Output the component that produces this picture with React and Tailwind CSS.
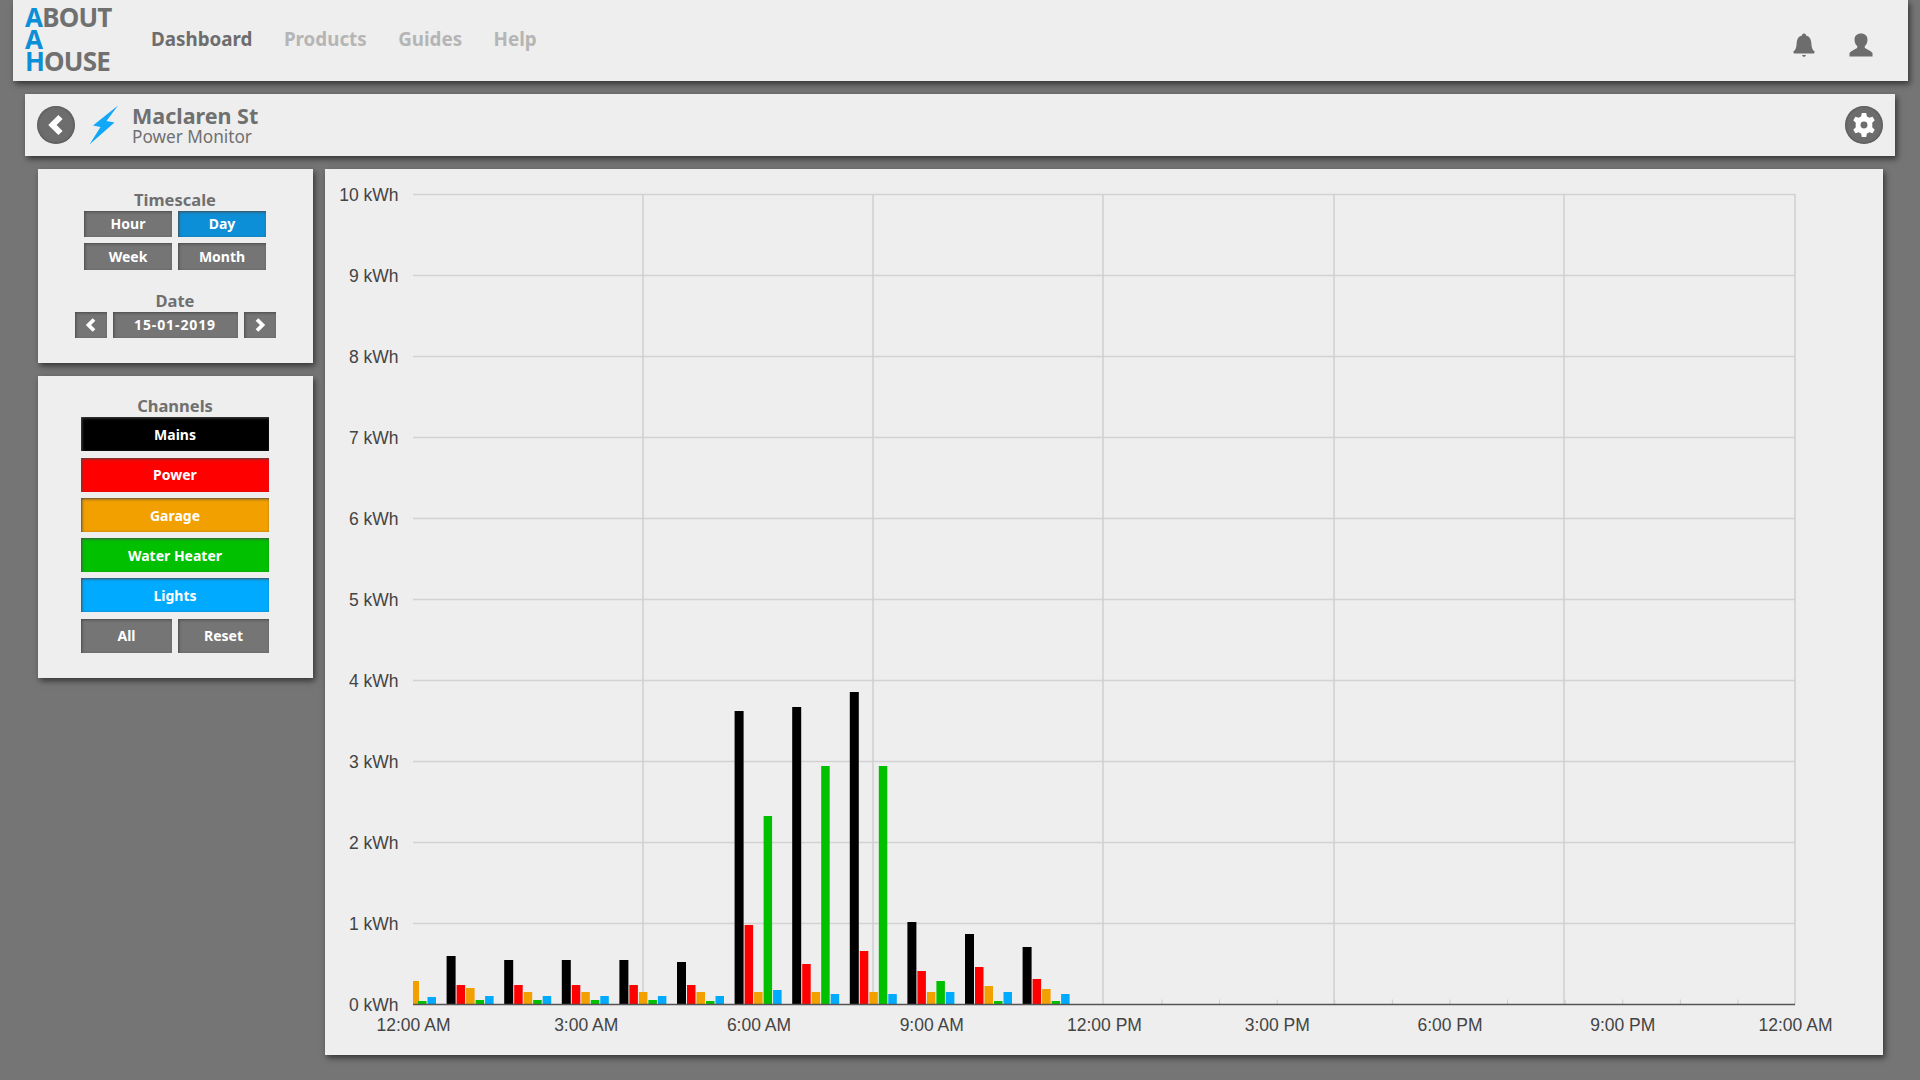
import React from "react";

const C = { black: "#000000", red: "#ff0000", orange: "#f2a000", green: "#00c000", blue: "#00aaff" };
const AXIS = 835.5; // svg y of zero line
const X0 = 88;
const groups = [
  [null, null, 981, 1001, 997],
  [956, 985, 988, 1000, 996],
  [960, 985, 992, 1000, 996],
  [960, 985, 992, 1000, 996],
  [960, 985, 992, 1000, 996],
  [962, 985, 992, 1001, 996],
  [711, 925, 992, 816, 990],
  [707, 964, 992, 766, 994],
  [692, 951, 992, 766, 994],
  [922, 971, 992, 981, 992],
  [934, 967, 986, 1001, 992],
  [947, 979, 989, 1001, 994],
];
const offs = [0, 10, 19.5, 29, 38.5];
const widths = [9, 8.5, 8.5, 8.5, 8.5];
const cols = [C.black, C.red, C.orange, C.green, C.blue];

function Chart() {
  const yLabels = [10, 9, 8, 7, 6, 5, 4, 3, 2, 1, 0];
  const xLabels = ["12:00 AM", "3:00 AM", "6:00 AM", "9:00 AM", "12:00 PM", "3:00 PM", "6:00 PM", "9:00 PM", "12:00 AM"];
  const rects = [];
  groups.forEach((g, i) => {
    const gx = 64 + 57.6 * i;
    g.forEach((top, j) => {
      if (top == null) return;
      let x = gx + offs[j];
      let w = widths[j];
      if (i === 0 && j === 2) { x = X0; w = 6; }
      rects.push(<rect key={i + "-" + j} x={x} y={top - 169} width={w} height={1004 - top + 0.5} fill={cols[j]} />);
    });
  });
  return (
    <svg width="1558" height="886" className="block" style={{ fontFamily: '"Liberation Sans", Arial, sans-serif' }}>
      {yLabels.map((v) => {
        const y = AXIS - v * 81;
        return (
          <g key={v}>
            {v > 0 && <line x1={X0} x2={1470} y1={y} y2={y} stroke="#d2d2d2" strokeWidth="1.5" />}
            <text x="73.5" y={y + 6.5} textAnchor="end" fontSize="17.5" fill="#444444">{v} kWh</text>
          </g>
        );
      })}
      {[318, 548, 778, 1009, 1239, 1470].map((x) => (
        <line key={x} x1={x} x2={x} y1={25} y2={AXIS} stroke="#cfcfcf" strokeWidth="1.5" />
      ))}
      {Array.from({ length: 11 }, (_, i) => 837 + 57.6 * i).map((x) => (
        <line key={x} x1={x} x2={x} y1={AXIS - 5} y2={AXIS} stroke="#cdcdcd" strokeWidth="1" />
      ))}
      {rects}
      <line x1={X0} x2={1470} y1={AXIS} y2={AXIS} stroke="#555555" strokeWidth="1.5" />
      {xLabels.map((t, i) => (
        <text key={i} x={X0 + 0.5 + 172.75 * i} y={862} textAnchor="middle" fontSize="17.5" fill="#444444">{t}</text>
      ))}
    </svg>
  );
}

function Btn({ className, children }) {
  return (
    <div className={"flex items-center justify-center text-[14px] font-bold text-white shadow-[inset_1px_1px_3px_#4a4a4a] " + className}>
      {children}
    </div>
  );
}

function Chevron({ dir, size = 14 }) {
  return (
    <svg width={size} height={size} viewBox="0 0 14 14">
      <path d={dir === "left" ? "M10 1.5 L4.5 7 L10 12.5" : "M4 1.5 L9.5 7 L4 12.5"} fill="none" stroke="#ffffff" strokeWidth="3.8" />
    </svg>
  );
}

const shadow = "shadow-[2px_3px_6px_rgba(0,0,0,0.55)]";

export default function App() {
  return (
    <div
      className="h-[1080px] w-[1920px] overflow-hidden bg-[#757575] text-[#707070]"
      style={{ fontFamily: '"Noto Sans", Tahoma, sans-serif' }}
    >
      <nav className={"ml-[13px] mr-[12px] flex h-[81px] items-center bg-[#eeeeee] pl-[12px] " + shadow}>
        <div className="mt-[-3px] w-[126px] text-[26px] font-bold leading-[22px] tracking-[-0.8px]">
          <div><span className="text-[#0d8fd8]">A</span>BOUT</div>
          <div className="text-[#0d8fd8]">A</div>
          <div><span className="text-[#0d8fd8]">H</span>OUSE</div>
        </div>
        <div className="mt-[-3px] flex gap-[31.5px] text-[18.8px] font-bold text-[#b5b5b5]">
          <span className="text-[#6d6d6d]">Dashboard</span>
          <span>Products</span>
          <span>Guides</span>
          <span>Help</span>
        </div>
        <div className="ml-auto mr-[35px] mt-[8px] flex items-center gap-[34px] text-[#6d6d6d]">
          <svg width="22" height="24" viewBox="0 0 22 24" fill="#6d6d6d">
            <path d="M11 0.5 C12.3 0.5 13 1.4 13 2.6 C16.8 3.4 18 6.5 18.3 10 C18.6 14 19 16.5 21.5 18.5 C21.8 19 21.5 20.5 20.6 20.5 L1.4 20.5 C0.5 20.5 0.2 19 0.5 18.5 C3 16.5 3.4 14 3.7 10 C4 6.5 5.2 3.4 9 2.6 C9 1.4 9.7 0.5 11 0.5 Z" />
            <path d="M9.2 22 L12.8 22 C12.8 23.2 12 23.8 11 23.8 C10 23.8 9.2 23.2 9.2 22 Z" />
          </svg>
          <svg width="24" height="24" viewBox="0 0 24 24" fill="#6d6d6d">
            <path d="M12 0.5 C16 0.5 18.5 3 18.5 6.5 C18.5 9.5 17.3 11.8 15.8 13 L15.8 15 C18 16.5 22 17.5 23.5 20 L23.5 23.5 L0.5 23.5 L0.5 20 C2 17.5 6 16.5 8.2 15 L8.2 13 C6.7 11.8 5.5 9.5 5.5 6.5 C5.5 3 8 0.5 12 0.5 Z" />
          </svg>
        </div>
      </nav>

      <header className={"mx-[25px] mt-[13px] flex h-[62px] items-center bg-[#eeeeee] pl-[12px] pr-[12px] " + shadow}>
        <div className="flex h-[38px] w-[38px] items-center justify-center rounded-full bg-[#6d6d6d] shadow-[inset_0_0_3px_rgba(0,0,0,0.4)]">
          <svg width="20" height="22" viewBox="0 0 20 22">
            <path d="M14.5 3 L6.5 11 L14.5 19" fill="none" stroke="#ffffff" strokeWidth="6" />
          </svg>
        </div>
        <svg className="ml-[14px]" width="30" height="40" viewBox="0 0 30 40" fill="#12a8f8">
          <path d="M29 0.5 L4 20.5 L11.5 22 L0.5 39.5 L25.5 17.5 L17.5 16 Z" />
        </svg>
        <div className="ml-[13px] flex flex-col">
          <span className="text-[21.5px] font-bold leading-[24px]">Maclaren St</span>
          <span className="text-[17.2px] leading-[18px]">Power Monitor</span>
        </div>
        <div className="ml-auto flex h-[38px] w-[38px] items-center justify-center rounded-full bg-[#6d6d6d] shadow-[inset_0_0_3px_rgba(0,0,0,0.4)]">
          <svg width="26" height="26" viewBox="0 0 24 24">
            <path
              fill="#ffffff"
              fillRule="evenodd"
              d="M10 1 L14 1 L14.7 4.1 C15.5 4.4 16.2 4.8 16.9 5.3 L19.9 4.3 L21.9 7.7 L19.6 9.9 C19.7 10.8 19.7 13.2 19.6 14.1 L21.9 16.3 L19.9 19.7 L16.9 18.7 C16.2 19.2 15.5 19.6 14.7 19.9 L14 23 L10 23 L9.3 19.9 C8.5 19.6 7.8 19.2 7.1 18.7 L4.1 19.7 L2.1 16.3 L4.4 14.1 C4.3 13.2 4.3 10.8 4.4 9.9 L2.1 7.7 L4.1 4.3 L7.1 5.3 C7.8 4.8 8.5 4.4 9.3 4.1 Z M12 8.8 A3.2 3.2 0 1 0 12 15.2 A3.2 3.2 0 1 0 12 8.8 Z"
            />
          </svg>
        </div>
      </header>

      <main className="mt-[13px] flex gap-[12px] pl-[38px]">
        <aside className="flex w-[275px] flex-col gap-[13px]">
          <section className={"flex h-[194px] flex-col items-center bg-[#eeeeee] pr-[1px] pt-[20px] " + shadow}>
            <div className="mb-[1px] text-[16.5px] font-bold leading-[21px]">Timescale</div>
            <div className="grid grid-cols-[88px_88px] gap-x-[6px] gap-y-[6px]">
              <Btn className="h-[26px] bg-[#757575] pb-[2px]">Hour</Btn>
              <Btn className="h-[26px] bg-[#0d8fd8] pb-[2px]">Day</Btn>
              <Btn className="h-[27px] bg-[#757575]">Week</Btn>
              <Btn className="h-[27px] bg-[#757575]">Month</Btn>
            </div>
            <div className="mb-[1px] mt-[20px] text-[16.5px] font-bold leading-[21px]">Date</div>
            <div className="flex gap-[6px]">
              <Btn className="h-[26px] w-[32px] bg-[#757575]"><Chevron dir="left" /></Btn>
              <Btn className="h-[26px] w-[125px] bg-[#757575] pb-[2px] tracking-[0.9px]">15-01-2019</Btn>
              <Btn className="h-[26px] w-[32px] bg-[#757575]"><Chevron dir="right" /></Btn>
            </div>
          </section>
          <section className={"flex h-[302px] flex-col items-center bg-[#eeeeee] pr-[1px] pt-[19px] " + shadow}>
            <div className="mb-[1px] text-[16.5px] font-bold leading-[21px]">Channels</div>
            <div className="flex w-[188px] flex-col gap-[6px]">
              <Btn className="h-[34px] bg-[#000000]">Mains</Btn>
              <Btn className="mt-[1px] h-[34px] bg-[#ff0000] pb-[2px]">Power</Btn>
              <Btn className="h-[34px] bg-[#f2a000]">Garage</Btn>
              <Btn className="h-[34px] bg-[#00c000]">Water Heater</Btn>
              <Btn className="h-[34px] bg-[#00aaff]">Lights</Btn>
              <div className="mt-[1px] flex gap-[6px]">
                <Btn className="h-[34px] flex-1 bg-[#757575] pb-[2px]">All</Btn>
                <Btn className="h-[34px] flex-1 bg-[#757575] pb-[2px]">Reset</Btn>
              </div>
            </div>
          </section>
        </aside>
        <section className={"h-[886px] w-[1558px] bg-[#eeeeee] " + shadow}>
          <Chart />
        </section>
      </main>
    </div>
  );
}
